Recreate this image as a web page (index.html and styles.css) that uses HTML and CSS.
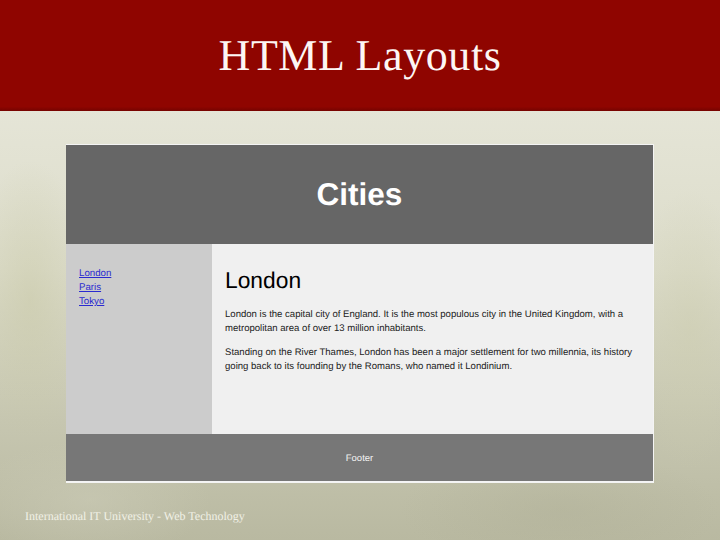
FILE: index.html
```html
<!DOCTYPE html>
<html lang="en">
<head>
    <meta charset="UTF-8">
    <meta name="viewport" content="width=device-width, initial-scale=1.0">
    <title>HTML Layouts</title>
    <link rel="stylesheet" href="styles.css">
</head>
<body>
    <div class="slide">
        <header class="slide-title">
            <h1>HTML Layouts</h1>
        </header>

        <!-- Screenshot of the example page -->
        <div class="browser-shot">
            <div class="page-header">Cities</div>
            <div class="page-middle">
                <nav class="page-nav">
                    <a href="#">London</a>
                    <a href="#">Paris</a>
                    <a href="#">Tokyo</a>
                </nav>
                <section class="page-content">
                    <h2>London</h2>
                    <p>London is the capital city of England. It is the most populous city in the United Kingdom, with a metropolitan area of over 13 million inhabitants.</p>
                    <p>Standing on the River Thames, London has been a major settlement for two millennia, its history going back to its founding by the Romans, who named it Londinium.</p>
                </section>
            </div>
            <div class="page-footer">Footer</div>
        </div>

        <div class="slide-footer">International IT University - Web Technology</div>
    </div>
</body>
</html>
```

FILE: styles.css
```css
html, body {
    margin: 0;
    padding: 0;
}

.slide {
    width: 720px;
    height: 540px;
    overflow: hidden;
    display: flex;
    flex-direction: column;
    text-rendering: geometricPrecision;
    background:
        radial-gradient(ellipse 120px 60px at 90px 500px, rgba(205, 205, 185, 0.5), transparent),
        radial-gradient(ellipse 160px 60px at 560px 510px, rgba(170, 170, 145, 0.3), transparent),
        radial-gradient(ellipse 60px 140px at 30px 300px, rgba(200, 200, 165, 0.5), transparent),
        radial-gradient(ellipse 60px 140px at 690px 330px, rgba(205, 205, 175, 0.5), transparent),
        linear-gradient(180deg, #e5e5d7 20%, #dcdcca 50%, #c6c6b0 78%, #b9b9a1 100%);
}

.slide-title {
    height: 111px;
    flex: none;
    display: flex;
    justify-content: center;
    background: linear-gradient(180deg, #8f0500 96%, #760300 100%);
}

.slide-title h1 {
    margin: 33px 0 0;
    font-family: "Liberation Serif", serif;
    font-size: 44px;
    line-height: 46px;
    font-weight: normal;
    letter-spacing: 0.6px;
    color: #fdf6f4;
}

.browser-shot {
    width: 588px;
    margin: 33px 0 0 66px;
    flex: none;
    font-family: "Liberation Sans", Arial, sans-serif;
    background: #f0f0f0;
    border: 1px solid #f4f4f4;
    border-left: none;
    border-bottom-width: 2px;
    box-sizing: border-box;
}

.page-header {
    height: 99px;
    display: flex;
    align-items: center;
    justify-content: center;
    background: #666;
    color: #fff;
    font-size: 31.5px;
    font-weight: bold;
}

.page-middle {
    height: 190px;
    display: flex;
}

.page-nav {
    width: 146px;
    flex: none;
    box-sizing: border-box;
    padding: 23px 13px;
    display: flex;
    flex-direction: column;
    align-items: flex-start;
    background: #ccc;
    font-size: 9.7px;
    line-height: 14px;
}

.page-nav a {
    color: #2a2ad0;
}

.page-content {
    flex: 1;
    padding: 22px 13px;
    color: #222;
    font-size: 9.57px;
    line-height: 14px;
}

.page-content h2 {
    margin: 0 0 14px;
    font-size: 22.8px;
    line-height: 28px;
    font-weight: normal;
    color: #000;
}

.page-content p {
    margin: 0 0 10px;
}

.page-footer {
    height: 47px;
    box-sizing: border-box;
    padding-top: 2px;
    display: flex;
    align-items: center;
    justify-content: center;
    background: #777;
    color: #f4f4f4;
    font-size: 9.5px;
}

.slide-footer {
    margin: 26px 0 0 25px;
    font-family: "Liberation Serif", serif;
    font-size: 12px;
    line-height: 14px;
    color: #f1f1e6;
}
```
